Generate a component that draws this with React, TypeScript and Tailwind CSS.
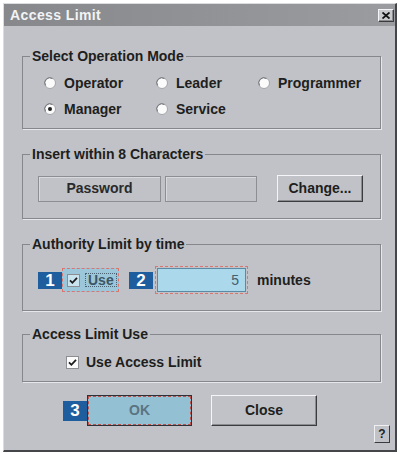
import type { ReactNode } from 'react';

function Radio({ label, checked }: { label: string; checked?: boolean }) {
  return (
    <div className="flex items-center gap-[8px] h-[16px]">
      <svg width="12" height="12" viewBox="0 0 12 12">
        <circle cx="6" cy="6" r="5.5" fill="#fbfbfb" stroke="#a4a6aa" />
        <path d="M1.6 8.5 A5 5 0 0 1 8.5 1.6" fill="none" stroke="#6f7175" strokeWidth="1" />
        {checked && <circle cx="6" cy="6" r="2" fill="#222" />}
      </svg>
      <span>{label}</span>
    </div>
  );
}

function Check({ tint = '#fbfbfb' }: { tint?: string }) {
  return (
    <svg width="13" height="13" viewBox="0 0 13 13">
      <rect x="0.5" y="0.5" width="12" height="12" fill={tint} stroke="#8c8e92" />
      <path d="M3 6.3 L5.4 8.8 L10 3.8" fill="none" stroke="#1c1c1c" strokeWidth="1.8" />
    </svg>
  );
}

function Badge({ n, h = 'h-[17px]' }: { n: string; h?: string }) {
  return (
    <div className={`w-[24px] ${h} bg-[#1f5e9e] text-white text-[17px] leading-none flex items-center justify-center`}>
      {n}
    </div>
  );
}

function Group({ title, children }: { title: string; children: ReactNode }) {
  return (
    <fieldset className="w-[359px] border border-[#85878c] shadow-[1px_1px_0_#e6e7ea]">
      <legend className="ml-[7px] px-[2px] text-[14px] leading-[16px]">{title}</legend>
      {children}
    </fieldset>
  );
}

const raised =
  'border border-t-[#f5f5f7] border-l-[#f5f5f7] border-r-[#3c3c3e] border-b-[#3c3c3e] shadow-[inset_-1px_-1px_0_#8a8c90]';

export default function App() {
  return (
    <div className="w-[400px] h-[454px] bg-white pt-[3px] pl-[3px] font-['Liberation_Sans',Arial,sans-serif] font-bold text-[14px] text-[#1e1e20]">
      <div className="w-[394px] h-[449px] bg-[#c0c2c7] border-l border-t border-[#dcdde0] border-r-2 border-b-2 border-r-[#45464a] border-b-[#45464a] flex flex-col">
        <div className="h-[22px] bg-gradient-to-r from-[#86888c] to-[#9a9ca0] flex items-center justify-between pl-[6px] pr-[1px]">
          <span className="text-[#f2f3f5] tracking-[0.4px] text-[14px]">Access Limit</span>
          <div className={`w-[16px] h-[13px] bg-[#c8cacd] ${raised} flex items-center justify-center`}>
            <svg width="8" height="7" viewBox="0 0 8 7">
              <path d="M0.5 0.5 L7.5 6.5 M7.5 0.5 L0.5 6.5" stroke="#111" strokeWidth="1.8" />
            </svg>
          </div>
        </div>

        <div className="flex-1 flex flex-col pl-[18px] pr-[5px] pt-[22px]">
          <Group title="Select Operation Mode">
            <div className="grid grid-cols-[112px_102px_auto] gap-y-[10px] pl-[21px] pt-[11px] pb-[11px]">
              <Radio label="Operator" />
              <Radio label="Leader" />
              <Radio label="Programmer" />
              <Radio label="Manager" checked />
              <Radio label="Service" />
            </div>
          </Group>

          <div className="mt-[17px]">
            <Group title="Insert within 8 Characters">
              <div className="flex items-center pl-[15px] pt-[13px] pb-[16px]">
                <div className="w-[123px] h-[26px] border border-[#8c8e93] shadow-[inset_1px_1px_0_#d8d9dc] flex items-center justify-center text-[#2a2a2c]">
                  Password
                </div>
                <div className="w-[92px] h-[26px] ml-[4px] border border-[#8c8e93] shadow-[inset_1px_1px_0_#d8d9dc]" />
                <div className={`w-[86px] h-[27px] ml-[20px] ${raised} flex items-center justify-center`}>
                  Change...
                </div>
              </div>
            </Group>
          </div>

          <div className="mt-[17px]">
            <Group title="Authority Limit by time">
              <div className="flex items-center h-[28px] pl-[15px] mt-[14px] mb-[16px]">
                <Badge n="1" />
                <div className="w-[57px] h-[24px] bg-[#9cc6da] border border-dashed border-[#d9776f] flex items-center pl-[4px]">
                  <Check tint="#c9e3ef" />
                  <span className="ml-[5px] px-[2px] h-[14px] leading-[13px] border border-dotted border-[#4a6272] text-[#3d5666]">
                    Use
                  </span>
                </div>
                <div className="ml-[10px]">
                  <Badge n="2" />
                </div>
                <div className="ml-[2px] w-[93px] h-[28px] border border-dashed border-[#d9776f] p-[1px]">
                  <div className="w-full h-full bg-[#acd8ec] border border-[#5a8ba5] flex items-center justify-end pr-[6px] text-[#44606f] font-normal">
                    5
                  </div>
                </div>
                <span className="ml-[9px]">minutes</span>
              </div>
            </Group>
          </div>

          <div className="mt-[15px]">
            <Group title="Access Limit Use">
              <div className="flex items-center gap-[7px] h-[16px] pl-[43px] mt-[12px] mb-[11px]">
                <Check />
                <span>Use Access Limit</span>
              </div>
            </Group>
          </div>

          <div className="flex mt-[13px] h-[50px]">
            <div className="flex items-start pl-[41px]">
              <div className="flex items-center h-[31px]">
                <Badge n="3" h="h-[20px]" />
                <div className="w-[105px] h-[31px] border border-[#2e3236] bg-[#93c0d3] flex items-center justify-center">
                  <div className="w-full h-full border border-dashed border-[#c0504a] flex items-center justify-center text-[#5b7482]">
                    OK
                  </div>
                </div>
              </div>
              <div className={`ml-[19px] w-[106px] h-[31px] ${raised} flex items-center justify-center`}>
                Close
              </div>
            </div>
            <div className="ml-auto self-end mb-[2px] w-[16px] h-[18px] border border-t-[#f0f0f2] border-l-[#f0f0f2] border-r-[#3c3c3e] border-b-[#3c3c3e] flex items-center justify-center text-[12px]">
              ?
            </div>
          </div>
        </div>
      </div>
    </div>
  );
}
